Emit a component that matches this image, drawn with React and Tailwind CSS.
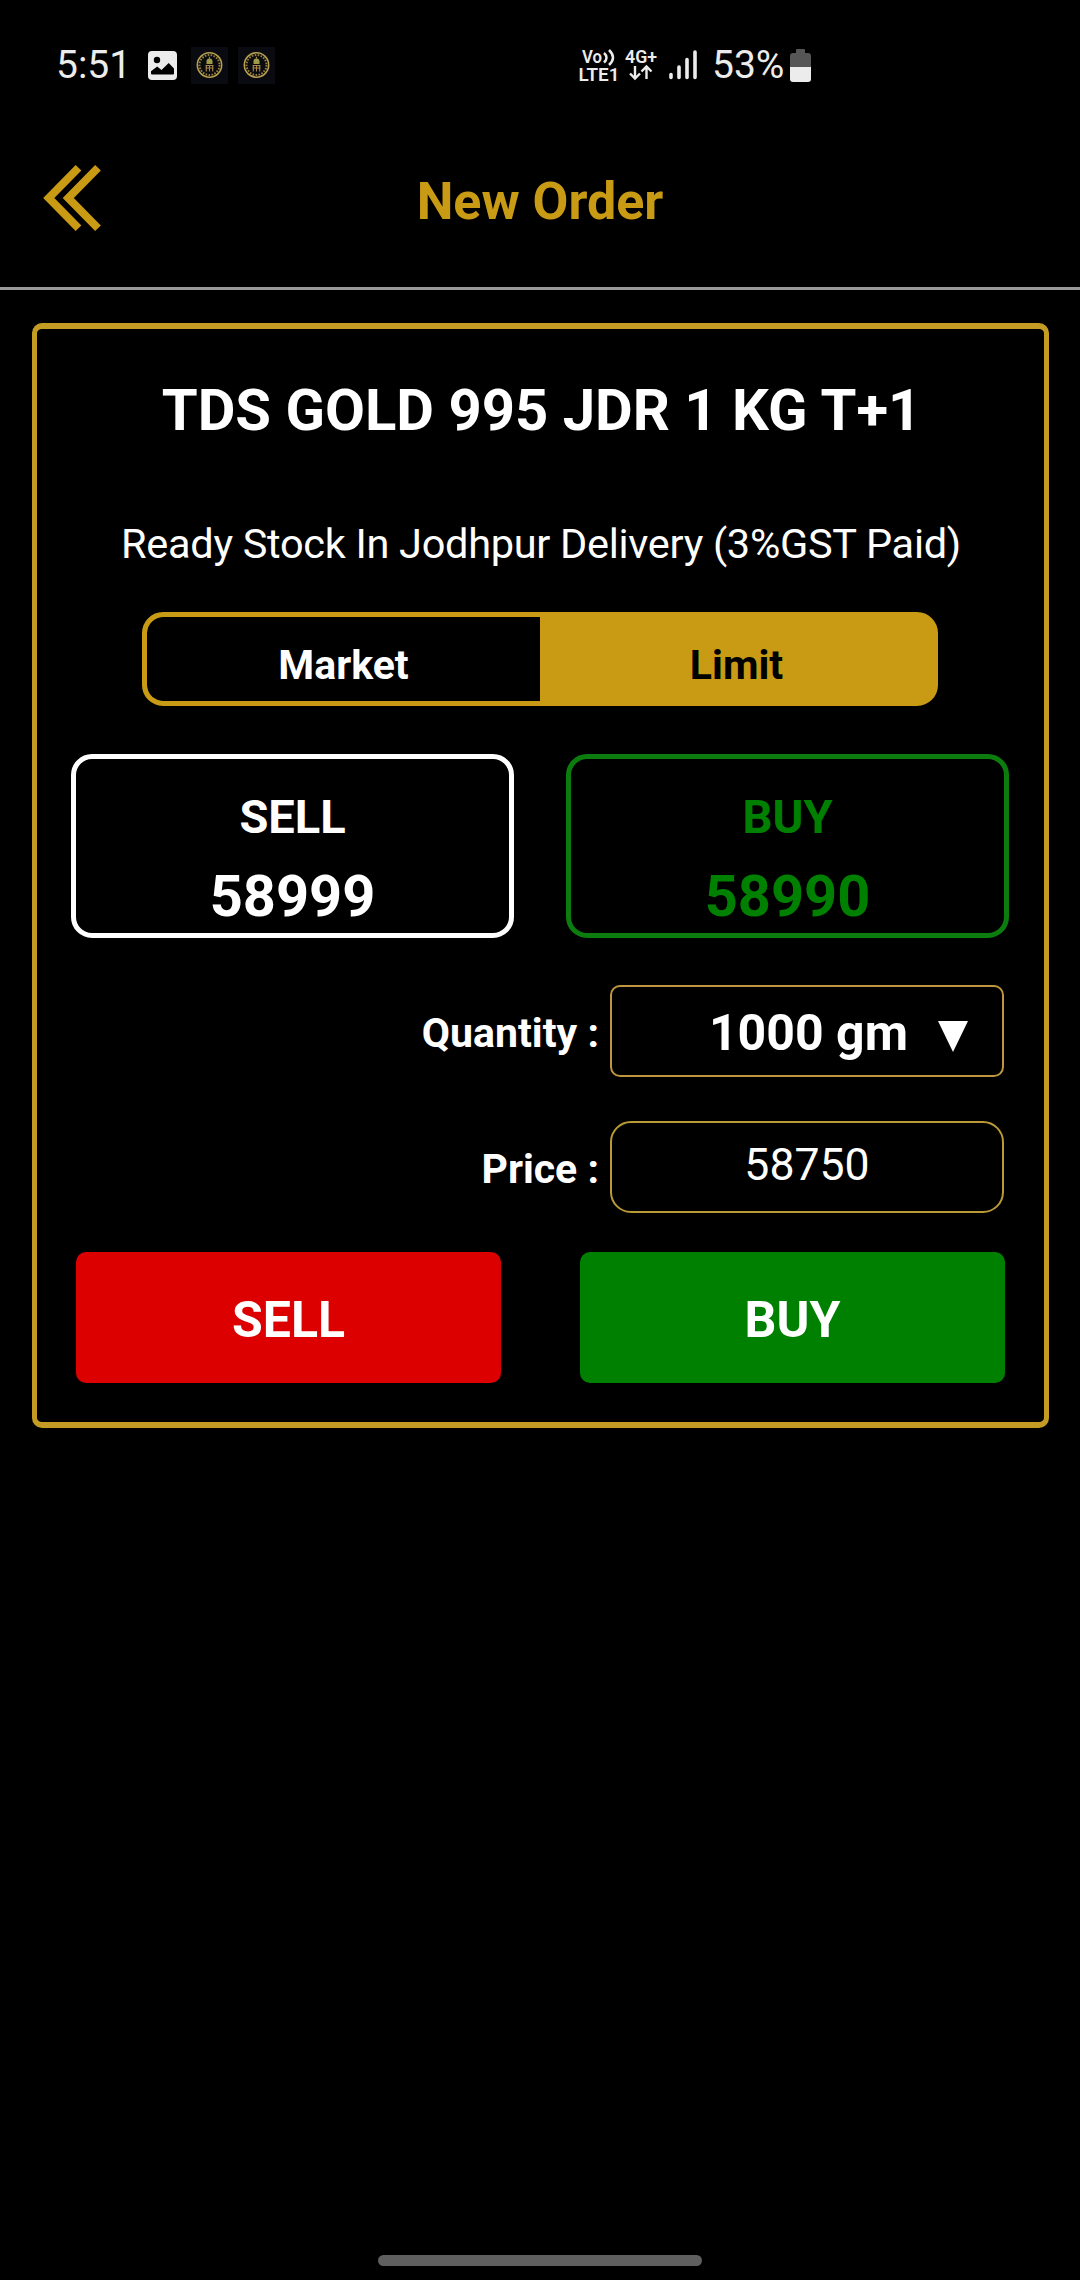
const SealIcon = () => (
  <svg viewBox="0 0 37 37" className="h-[37px] w-[37px]" fill="none">
    <rect width="37" height="37" fill="#090b10" />
    <circle cx="18.5" cy="18" r="12.2" stroke="#b8a050" strokeWidth="1.5" />
    <circle
      cx="18.5"
      cy="18"
      r="10"
      stroke="#947c3a"
      strokeWidth="2"
      strokeDasharray="1.6 1.4"
    />
    <path d="M15.500 17v-2.500a3 3 0 0 1 6 0V17z" fill="#9c9c48" />
    <path
      d="M18.500 9.800v2M14.500 18.500h8M14.500 21h8M15.300 19v5.500M18.500 19v5.500M21.700 19v5.500"
      stroke="#a8854a"
      strokeWidth="1.1"
    />
  </svg>
);

const StatusBar = () => (
  <div className="flex h-[130px] items-center text-[#ececec]">
    <span className="ml-[56px] w-[92px] text-[39px] leading-[46px]">
      5:51
    </span>
    <svg viewBox="0 0 29 29" className="mt-[1px] h-[29px] w-[29px]">
      <rect width="29" height="29" rx="4" fill="#ececec" />
      <circle cx="9" cy="9" r="3.2" fill="#000" />
      <path
        d="M3 22.500v-2.300l6.200-4.600 4.300 3.500 7.200-7 5.300 5.400v5q0 1-1 1H4q-1 0-1-1z"
        fill="#000"
      />
    </svg>
    <div className="ml-[14px] flex gap-[10px]">
      <SealIcon />
      <SealIcon />
    </div>

    <svg
      viewBox="0 0 42 38"
      className="ml-[304px] h-[38px] w-[42px] font-semibold"
      fill="#ececec"
    >
      <text x="3" y="17" fontSize="17.5" textLength="20" lengthAdjust="spacingAndGlyphs">
        Vo
      </text>
      <path
        d="M25 7q5 4.500 0 9.500M30 4q8 7.500 0 15"
        fill="none"
        stroke="#ececec"
        strokeWidth="2.5"
      />
      <text x="-0.5" y="34.500" fontSize="18.5" textLength="41" lengthAdjust="spacingAndGlyphs">
        LTE1
      </text>
    </svg>
    <svg
      viewBox="0 0 32 38"
      className="ml-[4px] h-[38px] w-[32px] font-semibold"
      fill="#ececec"
    >
      <text x="0" y="17" fontSize="17.5" textLength="32" lengthAdjust="spacingAndGlyphs">
        4G+
      </text>
      <path
        d="M10 20v12M5 27.500l5 5 5-5M21.500 33V21M16.500 25.500l5-5 5 5"
        fill="none"
        stroke="#ececec"
        strokeWidth="2.4"
      />
    </svg>
    <svg
      viewBox="0 0 28 30"
      className="ml-[12px] h-[30px] w-[28px]"
      stroke="#ececec"
      strokeWidth="3.6"
      strokeLinecap="round"
    >
      <path d="M2 24.500v3M10 17v10.500M18 9.500v18M26 2v25.500" />
    </svg>
    <span className="ml-[15px] w-[75px] text-[39px] leading-[46px]">53%</span>
    <svg viewBox="0 0 21 33" className="ml-[3px] h-[33px] w-[21px]">
      <path
        d="M6 1q0-1 1-1h7q1 0 1 1v3h3q3 0 3 3v11H0V7q0-3 3-3h3z"
        fill="#565656"
      />
      <path d="M0 18h21v12q0 3-3 3H3q-3 0-3-3z" fill="#ececec" />
    </svg>
  </div>
);

const Header = () => (
  <header className="grid h-[160px] grid-cols-[200px_1fr_200px] items-center border-b-[3px] border-[#999999] pb-[15px]">
    <button className="ml-[43px] w-[60px]">
      <svg
        viewBox="0 0 60 68"
        className="-mt-[6px] h-[68px] w-[60px]"
        fill="none"
        stroke="#c99a14"
        strokeWidth="8"
      >
        <path d="M35.500 3.800 5.800 34l29.700 30.200M55 3.800 25.300 34 55 64.200" />
      </svg>
    </button>
    <h1 className="pt-[2px] text-center text-[52px] leading-[62px] font-bold text-[#c99a14]">
      New Order
    </h1>
  </header>
);

const QuoteBox = ({ label, value, className }) => (
  <div
    className={`h-[184px] w-[443px] rounded-[21px] border-[5px] pt-[30px] text-center font-bold ${className}`}
  >
    <p className="text-[47px] leading-[56px]">{label}</p>
    <p className="mt-[16px] text-[57.75px] leading-[70px]">{value}</p>
  </div>
);

const FieldRow = ({ label, className, children }) => (
  <div className={`flex h-[92px] justify-end gap-[11px] pr-[40px] ${className}`}>
    <span className="pt-[3px] text-[41px] leading-[90px] font-bold">
      {label} :
    </span>
    {children}
  </div>
);

const OrderCard = () => (
  <section className="mt-[33px] mr-[31px] ml-[32px] rounded-[10px] border-x-[5px] border-y-[6px] border-[#c49c24] pt-[46px] pb-[39px]">
    <h2 className="pl-[2px] text-center text-[58px] leading-[70px] font-bold">
      TDS GOLD 995 JDR 1 KG T+1
    </h2>
    <p className="mt-[74px] pl-[1px] text-center text-[41.5px] leading-[50px] tracking-[-0.3px]">
      Ready Stock In Jodhpur Delivery (3%GST Paid)
    </p>

    <div className="mt-[43px] ml-[105px] grid h-[94px] w-[796px] grid-cols-2 overflow-hidden rounded-[21px] border-[5px] border-[#c99a14] bg-[#c99a14] text-center text-[41px] leading-[78px] font-bold">
      <button className="h-[84px] rounded-l-[16px] bg-black pt-[9px]">
        Market
      </button>
      <button className="h-[84px] bg-[#c99a14] pt-[9px] text-black">
        Limit
      </button>
    </div>

    <div className="mt-[48px] flex justify-between pr-[35px] pl-[34px]">
      <QuoteBox label="SELL" value="58999" className="border-white" />
      <QuoteBox
        label="BUY"
        value="58990"
        className="border-[#0c7c0f] text-[#008000]"
      />
    </div>

    <FieldRow label="Quantity" className="mt-[47px]">
      <div className="flex w-[394px] items-center justify-end rounded-[10px] border-2 border-[#bf9640] pt-[4px] pr-[33px]">
        <span className="text-[50px] leading-[60px] font-bold">1000 gm</span>
        <svg viewBox="0 0 31 31" className="mt-[6px] ml-[30px] h-[31px] w-[31px]">
          <path d="M0 0h30L15 31z" fill="#fff" />
        </svg>
      </div>
    </FieldRow>

    <FieldRow label="Price" className="mt-[44px]">
      <div className="flex w-[394px] items-center justify-center rounded-[21px] border-2 border-[#b99a35] pb-[4px]">
        <span className="text-[44.6px] leading-[54px]">58750</span>
      </div>
    </FieldRow>

    <div className="mt-[39px] flex justify-between px-[39px] text-[50px] leading-[126px] font-bold">
      <button className="h-[131px] w-[425px] rounded-[10px] bg-[#dc0000] pt-[5px]">
        SELL
      </button>
      <button className="h-[131px] w-[425px] rounded-[10px] bg-[#008000] pt-[5px]">
        BUY
      </button>
    </div>
  </section>
);

export default function App() {
  return (
    <div className="flex h-[2280px] w-[1080px] flex-col bg-black font-['Roboto',sans-serif] text-white">
      <StatusBar />
      <Header />
      <OrderCard />
      <div className="mx-auto mt-auto mb-[14px] h-[11px] w-[324px] rounded-full bg-[#5f5f5f]" />
    </div>
  );
}
